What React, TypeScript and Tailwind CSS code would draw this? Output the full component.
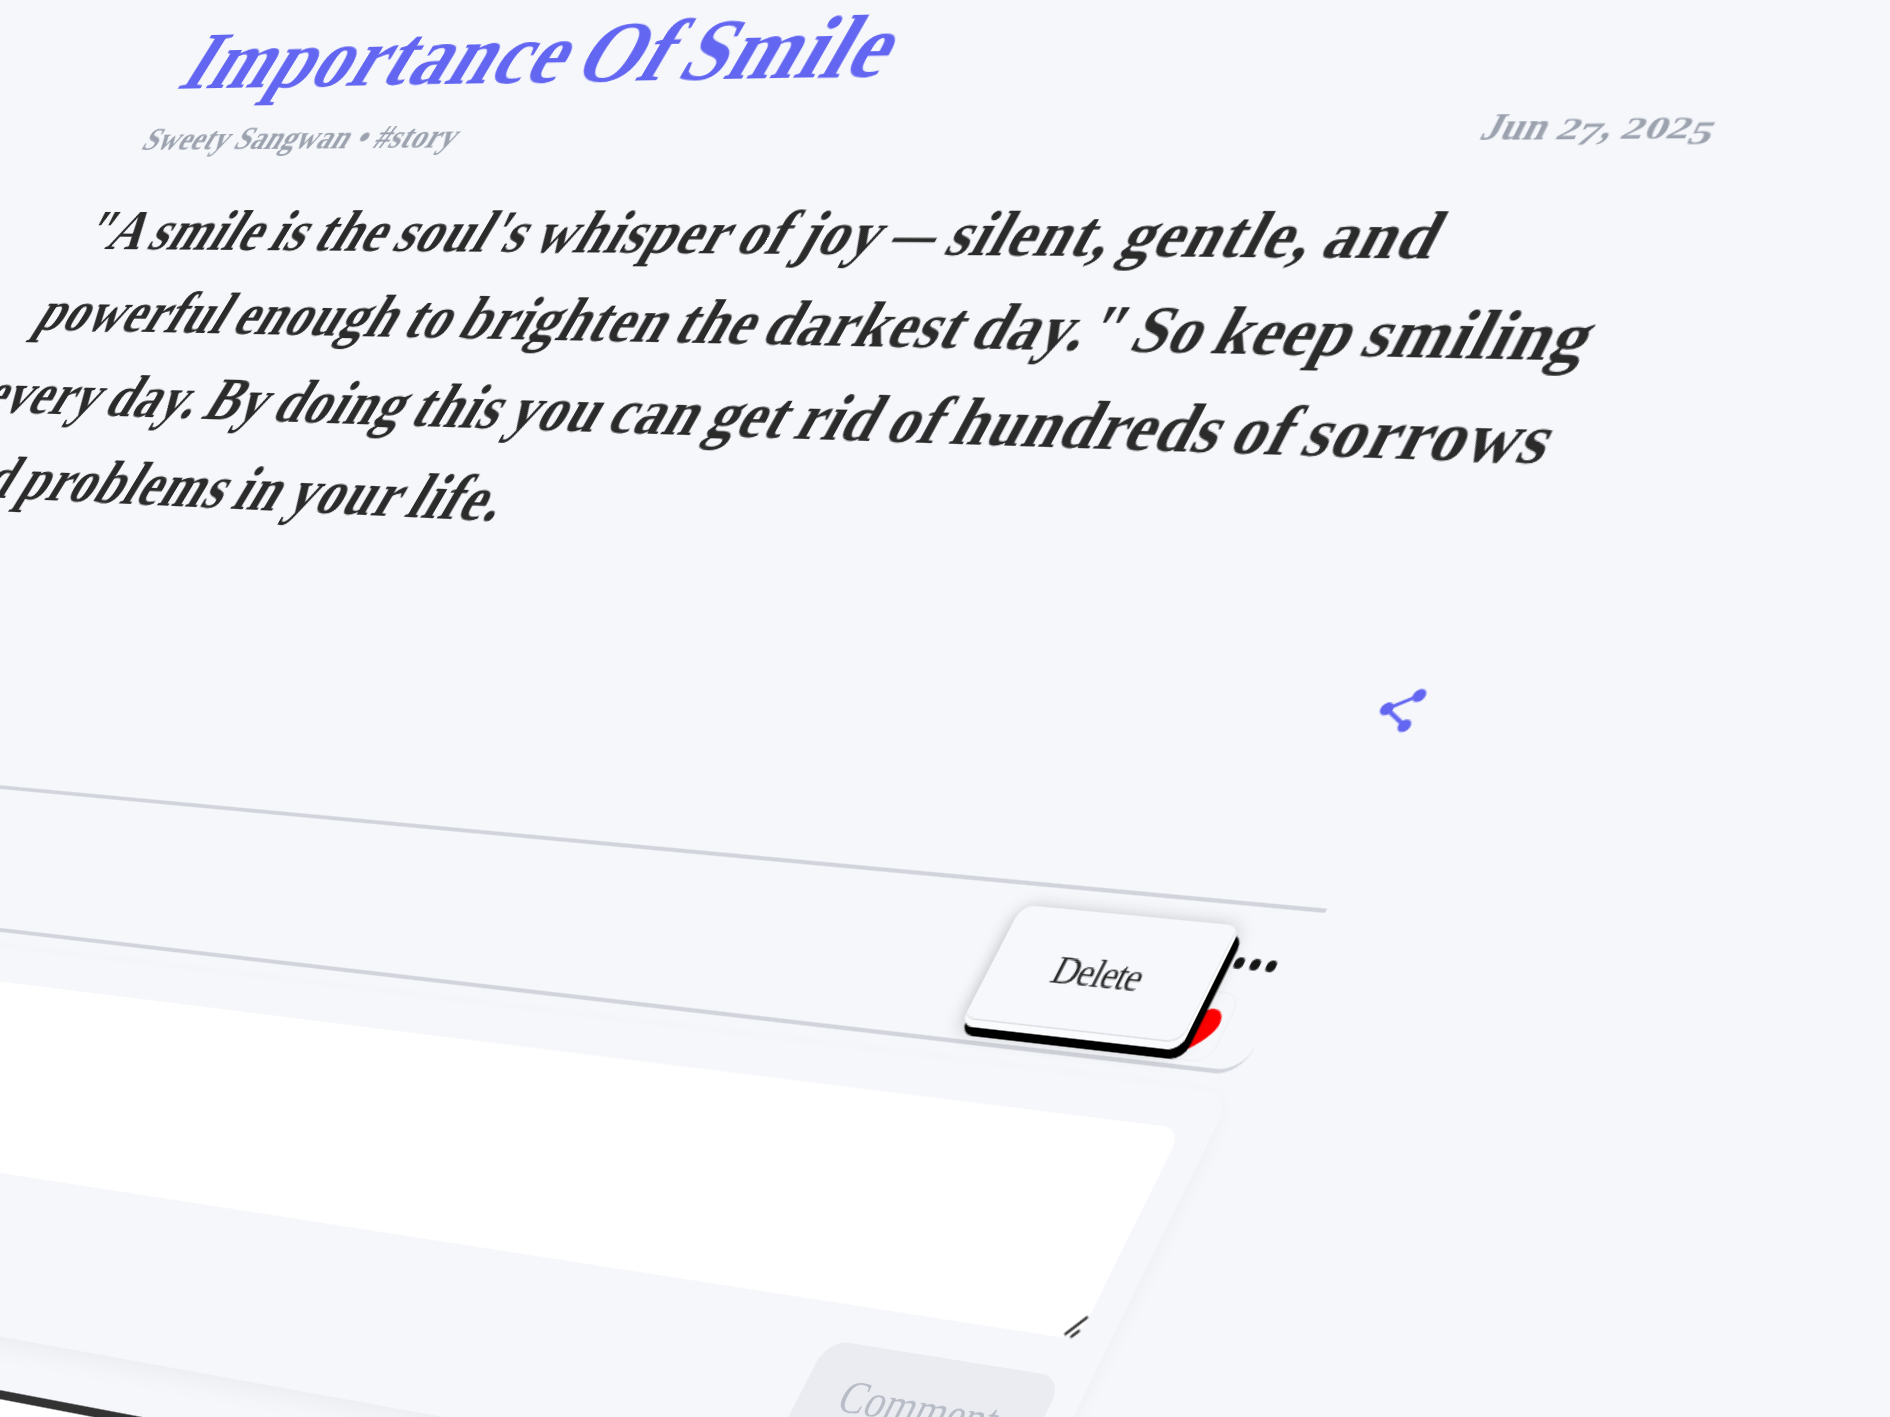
import { MdShare } from "react-icons/md";

/** Digits in the old-style figure manner: wide, x-height tall, some descending. */
function Figures({ value }: { value: string }) {
  return (
    <span>
      {value.split("").map((d, i) => (
        <span key={i} className="inline-block w-[17.4px]">
          <span
            className={
              "3457".includes(d)
                ? "inline-block origin-left translate-y-[4.5px] scale-x-[1.38] text-[26px]"
                : "inline-block origin-left scale-x-[1.4] text-[25px]"
            }
          >
            {d}
          </span>
        </span>
      ))}
    </span>
  );
}

function Header() {
  return (
    <header>
      <h1 className="-ml-[5px] whitespace-nowrap text-[81.7px] font-bold leading-[83px] tracking-[1.2px] text-[#6366f1] [word-spacing:-8px]">
        Importance Of Smile
      </h1>
      <div className="-ml-[2px] mt-[15.7px] flex h-10 items-baseline justify-between whitespace-nowrap text-[32px] font-bold leading-10 text-[#9ca3af]">
        <span className="tracking-[0.3px]">Sweety Sangwan • #story</span>
        <span className="relative top-px -mr-[4px]">
          Jun <Figures value="27" />, <Figures value="2025" />
        </span>
      </div>
    </header>
  );
}

function Story() {
  return (
    <p className="mt-[30.9px] whitespace-nowrap text-[54px] font-bold leading-[78.2px] text-[#2b2b2b] [word-spacing:-4px]">
      <span className="-ml-[3px] block tracking-[1.06px]">
        "A smile is the soul's whisper of joy{" "}
        <span className="inline-block w-[41px]">
          <span className="inline-block origin-left scale-x-[0.72]">—</span>
        </span>{" "}
        silent, gentle, and
      </span>
      <span className="ml-[4px] block tracking-[0.74px]">
        powerful enough to brighten the darkest day." So keep smiling
      </span>
      <span className="ml-px block tracking-[0.95px]">
        every day. By doing this you can get rid of hundreds of sorrows
      </span>
      <span className="ml-[2px] block tracking-[1.2px]">
        and problems in your life.
      </span>
    </p>
  );
}

function CommentItem() {
  return (
    <div className="relative mr-[3px] h-[113.7px] rounded-br-[20px] border-b-[3px] border-[#d1d5db]">
      <div className="absolute right-[13px] top-[35.5px] flex gap-[4.6px]">
        <i className="size-[7.4px] rounded-full bg-[#161616]" />
        <i className="size-[7.4px] rounded-full bg-[#161616]" />
        <i className="size-[7.4px] rounded-full bg-[#161616]" />
      </div>
      <div className="absolute right-[27px] top-[59px] flex h-[48px] w-[46px] items-center justify-center rounded-[12px] border border-[#eff0f4]">
        <svg viewBox="0 0 34 31" className="mt-[8px] h-[31px] w-[34px]">
          <path
            d="M17 31C14 28 0 19 0 9.500C0 4 4 0 9 0C12.500 0 15.500 2 17 5C18.500 2 21.500 0 25 0C30 0 34 4 34 9.500C34 19 20 28 17 31Z"
            fill="#ff0000"
          />
        </svg>
      </div>
      <button className="absolute right-[52.5px] top-[14.5px] flex h-[87px] w-[171px] items-center justify-center rounded-[10px] bg-[#f6f8fc] pb-[4px] pr-[3px] text-[28px] tracking-[-0.9px] text-[#2b2b2b] shadow-[inset_-2px_-5px_0_#fafbfd,inset_-2.5px_-6px_0_#dcdee3,5.5px_6px_0_#000,3px_6px_0_#000,0_2px_14px_rgba(0,0,0,0.25)]">
        Delete
      </button>
    </div>
  );
}

function CommentForm() {
  return (
    <form className="mr-[3px] mt-[11.8px] flex flex-col items-end rounded-[20px] bg-[#f5f7fa] pb-6 pl-6 pr-[21px] pt-[26px] shadow-[0_6px_18px_-2px_rgba(0,0,0,0.05)]">
      <div className="mr-[2.5px] flex h-[141px] w-full items-end justify-end rounded-[14px] bg-white">
        <svg viewBox="0 0 16 18" className="h-[18px] w-[16px]">
          <path
            d="M5 16L15 3M10 17L14 12"
            stroke="#3c3c3c"
            strokeWidth="2.2"
          />
        </svg>
      </div>
      <button className="-mr-px mt-[23.5px] flex h-[66px] w-[181px] items-center justify-center rounded-[16px] bg-[#ebecf1] text-[30px] tracking-[0.1px] text-[#b7bcc7]">
        Comment
      </button>
    </form>
  );
}

export default function App() {
  return (
    <div className="h-screen w-screen overflow-hidden bg-[#f5f7fb] font-['Liberation_Serif',serif]">
      <main className="w-[1467px] origin-top-left [transform:matrix3d(0.8331,-0.02719,0,-0.0001333,-0.6404,0.9918,0,-0.000087,0,0,1,0,180,88.3,0,1)_translateY(-68.6px)]">
        <Header />
        <Story />
        <div className="mt-[64.8px] flex justify-end">
          <MdShare className="size-[37.5px] text-[#6366f1]" />
        </div>
        <hr className="mt-[121.1px] border-0 border-t-[3.3px] border-[#d1d5db]" />
        <CommentItem />
        <CommentForm />
        <footer className="-mx-[300px] mt-[36px] h-[500px] border-t-[6px] border-[#333] bg-white" />
      </main>
    </div>
  );
}
